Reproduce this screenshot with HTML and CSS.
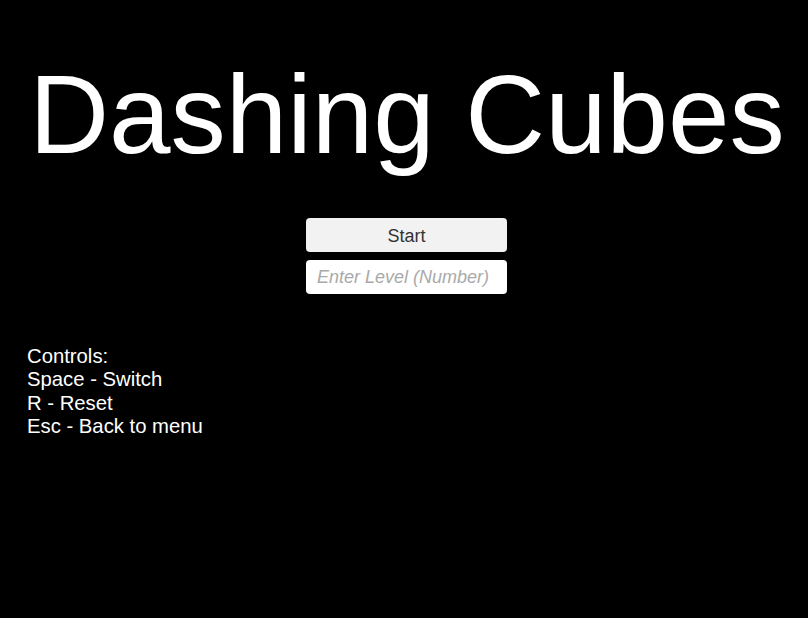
FILE: index.html
```html
<!DOCTYPE html>
<html lang="en">
<head>
<meta charset="utf-8">
<title>Dashing Cubes</title>
<link rel="stylesheet" href="styles.css">
</head>
<body>
<main class="menu">
  <h1 class="title">Dashing Cubes</h1>
  <div class="actions">
    <button class="start-btn" type="button">Start</button>
    <input class="level-input" type="text" placeholder="Enter Level (Number)">
  </div>
  <div class="controls">
    <div>Controls:</div>
    <div>Space - Switch</div>
    <div>R - Reset</div>
    <div>Esc - Back to menu</div>
  </div>
</main>
</body>
</html>
```

FILE: styles.css
```css
html, body {
  margin: 0;
  padding: 0;
  background: #000;
  width: 808px;
  height: 618px;
  overflow: hidden;
}
.menu {
  display: flex;
  flex-direction: column;
  font-family: "Liberation Sans", Arial, sans-serif;
  color: #fff;
  padding-top: 60px;
}
.title {
  margin: 0;
  font-weight: normal;
  font-size: 110.5px;
  line-height: 110px;
  text-align: center;
  padding-left: 6px;
}
.actions {
  display: flex;
  flex-direction: column;
  align-items: center;
  gap: 8px;
  margin-top: 48px;
  padding-left: 5px;
}
.start-btn,
.level-input {
  width: 201px;
  height: 34px;
  box-sizing: border-box;
  border: none;
  border-radius: 4px;
  font-family: "Liberation Sans", Arial, sans-serif;
  font-size: 18px;
  margin: 0;
}
.start-btn {
  background: #f2f2f2;
  color: #333;
  padding: 2px 0 0;
}
.level-input {
  background: #fff;
  color: #333;
  padding: 1px 11px 0;
}
.level-input::placeholder {
  color: #a9a9a9;
  font-style: italic;
}
.controls {
  margin-top: 51px;
  padding-left: 27px;
  font-size: 20.3px;
  line-height: 23.4px;
}
```
